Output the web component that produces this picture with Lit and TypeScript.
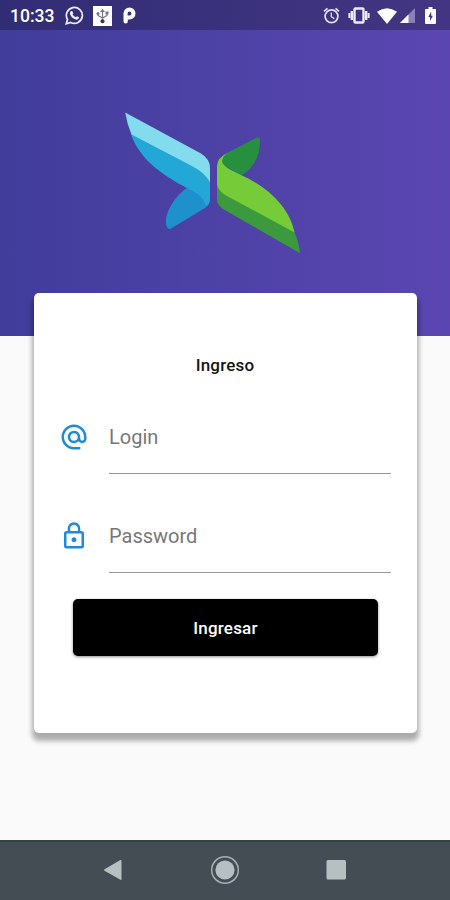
import { LitElement, html, css, svg } from "lit";
import { customElement, property } from "lit/decorators.js";

const atIcon = svg`<path d="M12 1.950c-5.520 0-10 4.480-10 10s4.480 10 10 10h5v-2h-5c-4.340 0-8-3.660-8-8s3.660-8 8-8 8 3.660 8 8v1.430c0 .790-.710 1.570-1.500 1.570s-1.500-.780-1.500-1.570v-1.430c0-2.760-2.240-5-5-5s-5 2.240-5 5 2.240 5 5 5c1.380 0 2.640-.560 3.540-1.470.650.890 1.770 1.470 2.960 1.470 1.970 0 3.500-1.600 3.500-3.570v-1.430c0-5.520-4.480-10-10-10zm0 13c-1.660 0-3-1.340-3-3s1.340-3 3-3 3 1.340 3 3-1.340 3-3 3z"/>`;
const lockIcon = svg`<path d="M12 17c1.100 0 2-.900 2-2s-.900-2-2-2-2 .900-2 2 .900 2 2 2zm6-9h-1V6c0-2.760-2.240-5-5-5S7 3.240 7 6v2H6c-1.100 0-2 .900-2 2v10c0 1.100.900 2 2 2h12c1.100 0 2-.900 2-2V10c0-1.100-.900-2-2-2zM8.900 6c0-1.710 1.390-3.100 3.100-3.100s3.100 1.390 3.100 3.100v2H8.900V6zM18 20H6V10h12v10z"/>`;

@customElement("status-bar")
class StatusBar extends LitElement {
  static styles = css`
    :host { display: flex; height: 30px; box-sizing: border-box; padding: 1px 14px 0 10px; align-items: center;
      background: linear-gradient(90deg, #312d75, #433582); color: #fff; }
    .time { font: 500 17.5px Roboto, sans-serif; width: 55px; }
    .group { display: flex; align-items: center; }
    .end { margin-left: auto; }
    svg { display: block; flex: none; }
    .usb { margin-left: 9px; }
    .park { margin-left: 11px; }
    .vibrate { margin-left: 8px; }
    .wifi { margin-left: 7px; }
    .signal { margin-left: 3px; }
    .battery { margin-left: 10px; }
  `;
  render() {
    return html`
      <span class="time">10:33</span>
      <div class="group">
        <svg width="19" height="19" viewBox="0 0 19 19" fill="none">
          <path d="M1.300 17.700 2.500 13.500A8 8 0 1 1 5.700 16.500Z" stroke="#eeeefa" stroke-width="1.700"/>
          <path d="M5.800 5.200 7.200 4.900 8.300 7.200 7.500 8.300Q8.500 10.400 10.800 11.200L11.900 10.200 14 11.300Q14 13.700 11.600 13.700C8 13.400 4.800 9.600 4.900 7.100Q5 5.800 5.800 5.200Z" fill="#eeeefa"/>
        </svg>
        <svg class="usb" width="19" height="20" viewBox="0 0 19 20">
          <rect width="19" height="20" fill="#fff"/>
          <path d="M9.500 5v9M5 8v1.500l4.500 2.500L14 9.500V7" fill="none" stroke="#77758a" stroke-width="1.200"/>
          <path d="m9.500 2.800 2.500 3.200H7Z" fill="#77758a"/><rect x="12.500" y="5.500" width="3" height="3" fill="#77758a"/>
          <circle cx="5" cy="7.500" r="1.600" fill="#77758a"/><circle cx="9.500" cy="15.300" r="2" fill="#39374f"/>
        </svg>
        <svg class="park" width="13" height="17" viewBox="0 0 13 17">
          <path fill="#fff" fill-rule="evenodd" d="M.500 14.500V6.500A6 6 0 1 1 6.500 12.500H4.800V14.300A2.150 2.150 0 0 1 .500 14.500ZM4.600 6.500V8.500H6.500A2 2 0 0 0 6.500 4.500Q4.600 4.500 4.600 6.500Z"/>
        </svg>
      </div>
      <div class="group end">
        <svg width="17" height="17" viewBox="0 0 17 17" fill="none" stroke="#e4e0f5" stroke-width="1.700">
          <circle cx="8.500" cy="9.300" r="6.400"/><path d="M1 4.300 4.500 1.300M16 4.300 12.500 1.300"/><path d="M8.300 5.500v4.200l3 1.900" stroke-width="1.300"/>
        </svg>
        <svg class="vibrate" width="22" height="17" viewBox="0 0 22 17" fill="none" stroke="#eeeafa">
          <rect x="6.500" y="1.500" width="9" height="14" rx="1" stroke-width="2.400"/><path d="M3.800 4v9M18.200 4v9" stroke-width="2.400"/><path d="M1.400 6v5M20.600 6v5" stroke-width="2"/>
        </svg>
        <svg class="wifi" width="20" height="16" viewBox="0 0 20 16"><path fill="#fff" d="M0 3.800Q10-3.400 20 3.800L10 16Z"/></svg>
        <svg class="signal" width="15" height="15" viewBox="0 0 15 15"><path fill="#8880b8" d="M15 0V15H0Z"/><path fill="#fff" d="M8.500 6.500V15H0Z"/></svg>
        <svg class="battery" width="11" height="17" viewBox="0 0 11 17"><path fill="#fff" d="M1 2H3.500V0h4v2H10Q11 2 11 3V16Q11 17 10 17H1Q0 17 0 16V3Q0 2 1 2Z"/><path fill="#41347f" d="M6.200 4.500 3.300 10H5v4L7.900 8.800H6.200Z"/></svg>
      </div>`;
  }
}

@customElement("login-field")
class LoginField extends LitElement {
  @property() label = "";
  @property() icon = "";
  static styles = css`
    :host { display: flex; height: 99px; align-items: flex-start; }
    svg { width: 30px; height: 30px; margin: 9px 20px 0 0; flex: none; fill: #2089da; }
    .input { flex: 1; height: 61px; box-sizing: border-box; border-bottom: 1px solid #999;
      font: 400 20px/48px Roboto, sans-serif; color: #777; }
  `;
  render() {
    return html`<svg viewBox="0 0 24 24">${this.icon === "at" ? atIcon : lockIcon}</svg>
      <div class="input">${this.label}</div>`;
  }
}

@customElement("nav-bar")
class NavBar extends LitElement {
  static styles = css`
    :host { display: grid; grid-template-columns: repeat(3, 111.500px); justify-content: center; justify-items: center; align-items: center;
      height: 60px; box-sizing: border-box; border-top: 2px solid #35423f; padding-bottom: 2px; background: #454d54; }
    svg { display: block; }
  `;
  render() {
    return html`
      <svg width="30" height="30" viewBox="0 0 30 30"><path d="M22.500 6v18Q22.500 25.500 21 24.500L5.500 15.800Q4.500 15 5.500 14.200L21 5.300Q22.500 4.500 22.500 6Z" fill="#b7c0c1"/></svg>
      <svg width="30" height="30" viewBox="0 0 30 30"><circle cx="15" cy="15" r="13.300" fill="none" stroke="#a8b0b1" stroke-width="1.500"/><circle cx="15" cy="15" r="9.600" fill="#b7c0c1"/></svg>
      <svg width="30" height="30" viewBox="0 0 30 30"><rect x="4.500" y="5" width="19.500" height="19.500" rx="1.500" fill="#b7c0c1"/></svg>`;
  }
}

@customElement("app-root")
class AppRoot extends LitElement {
  static styles = css`
    :host { display: flex; flex-direction: column; width: 450px; height: 900px; overflow: hidden; background: #fafafa; font-family: Roboto, sans-serif; }
    .hero { display: flow-root; height: 306px; flex: none; background: linear-gradient(90deg, #403d9b, #5b46b1); }
    .logo { display: block; margin: 80px 0 0 123px; }
    .card { position: relative; width: 383px; height: 440px; flex: none; box-sizing: border-box; margin: -43px 0 0 34px; padding: 61px 26px 0 25px;
      background: #fff; border-radius: 5px; box-shadow: 0 6px 5px 2px rgba(0, 0, 0, 0.31); }
    .title { margin: 0 0 37px; font: 500 17px/22px Roboto, sans-serif; letter-spacing: 0.2px; text-align: center; color: #151515; }
    .form { display: flex; flex-direction: column; }
    .submit { display: block; width: 305px; height: 57px; margin: -12px 0 0 14px; padding: 1px 0 0; border: 0; border-radius: 5px; background: #000; color: #fff;
      font: 500 17px/56px Roboto, sans-serif; letter-spacing: 0.2px; box-shadow: 0 1px 3px rgba(0, 0, 0, 0.45); }
    nav-bar { margin-top: auto; }
  `;
  render() {
    return html`
      <status-bar></status-bar>
      <div class="hero">
        <svg class="logo" width="180" height="145" viewBox="123 110 180 145">
          <path fill="#1e91cd" d="M187 188C177 194 162 214 167 227Q168 230 171 228.500L205 208Q210 204.500 210 200L207 194Z"/>
          <path fill="#23a7d6" d="M131 134C139 158 160 174 187 188Q202 194 206.500 206Q210 203 210 198V170L190 162Z"/>
          <path fill="#83dced" d="M125.200 112.600 201 153.500Q210 159 210 168V182.500C206 175 200 170 190 165L131.500 134.500Q127 124 125.200 112.600Z"/>
          <path fill="#26903f" d="M241 175.500C253 169 260 157 260 141Q260 135.500 256 138L227 153Q219 158 222 164Z"/>
          <path fill="#3b9a3d" d="M217 183V199Q217 205 223 209L300 253.300Q299 243 294 231Z"/>
          <path fill="#76cb38" d="M228 152.500Q217 158 217 166V185Q219 192 227 196L294.500 232.500C290 209 270 188 241 175C228 169 222 165 222 161Q223 155.500 228 152.500Z"/>
        </svg>
      </div>
      <main class="card">
        <h1 class="title">Ingreso</h1>
        <div class="form">
          <login-field label="Login" icon="at"></login-field>
          <login-field label="Password" icon="lock"></login-field>
          <button class="submit">Ingresar</button>
        </div>
      </main>
      <nav-bar></nav-bar>`;
  }
}
